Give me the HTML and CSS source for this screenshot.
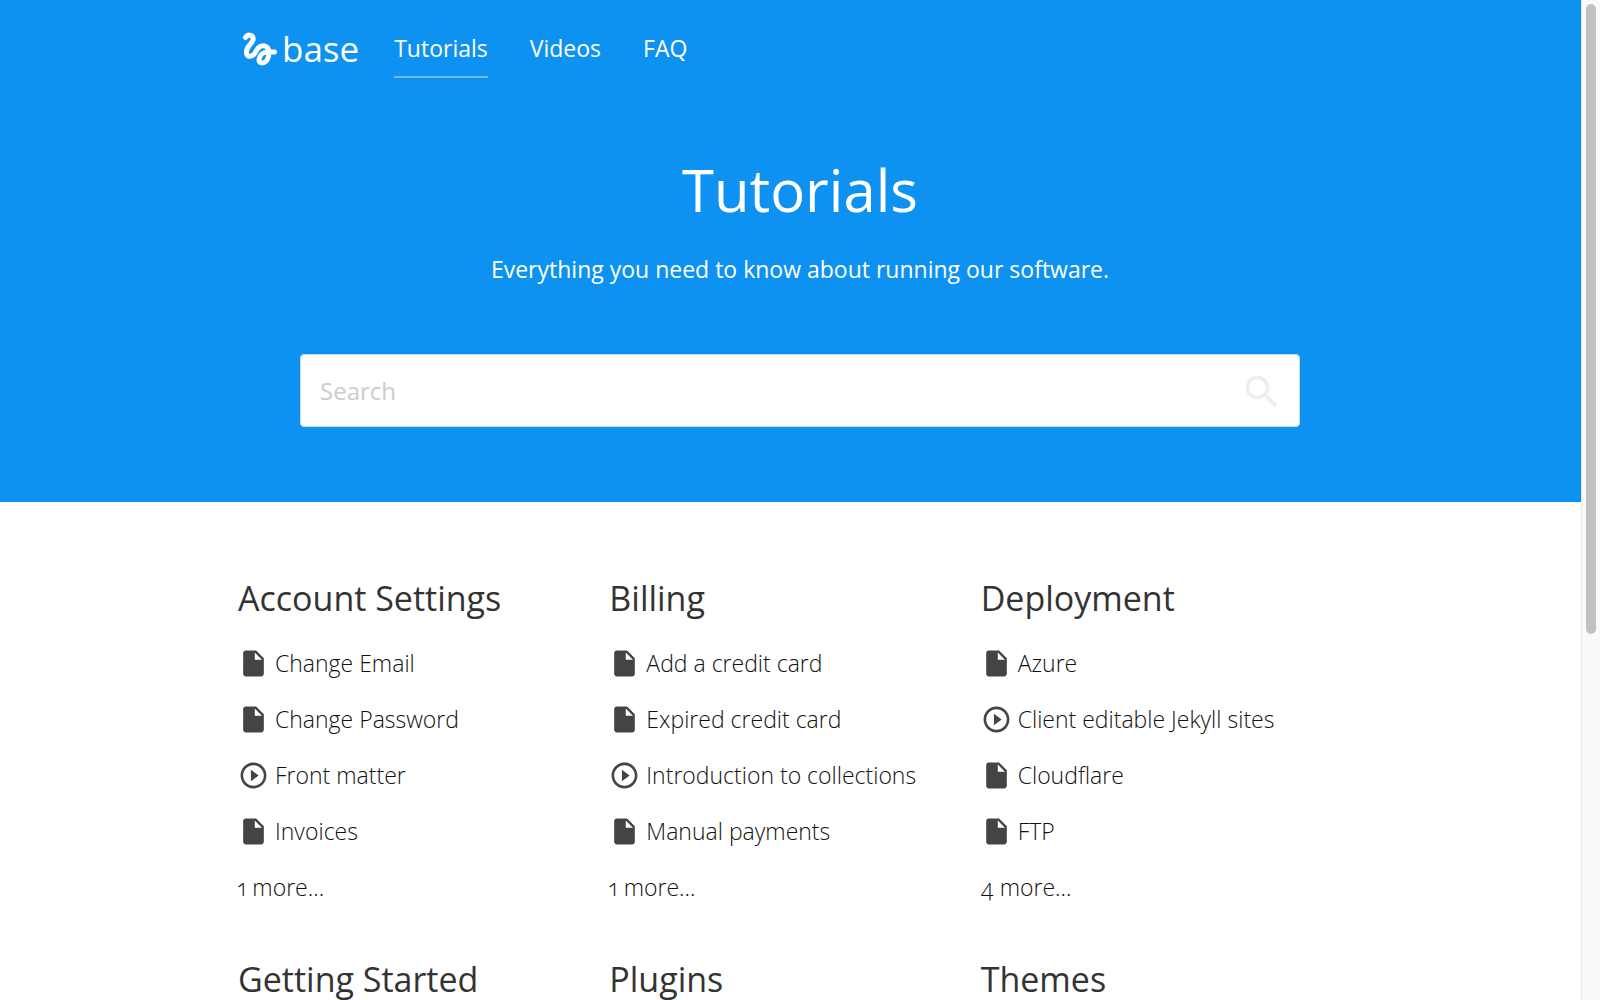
FILE: index.html
```html
<!DOCTYPE html>
<html lang="en">
<head>
<meta charset="utf-8">
<meta name="viewport" content="width=device-width, initial-scale=1">
<title>Tutorials - base</title>
<link rel="stylesheet" href="styles.css">
</head>
<body>
<svg class="sprite" aria-hidden="true">
  <symbol id="doc" viewBox="0 0 24 24"><path d="M6 2c-1.100 0-1.990.9-1.990 2L4 20c0 1.100.89 2 1.990 2H18c1.100 0 2-.9 2-2V8l-6-6H6zm7 7V3.500L18.500 9H13z"/></symbol>
  <symbol id="play" viewBox="0 0 24 24"><path d="M10 16.500l6-4.500-6-4.500v9zM12 2C6.480 2 2 6.480 2 12s4.480 10 10 10 10-4.480 10-10S17.520 2 12 2zm0 18c-4.410 0-8-3.590-8-8s3.590-8 8-8 8 3.590 8 8-3.590 8-8 8z"/></symbol>
</svg>

<div class="hero">
  <header class="container header">
    <a class="logo" href="#">
      <svg class="logo-mark" viewBox="0 0 36 36" aria-hidden="true"><path d="M4.500 6.500C7 2.500 13 4 12 9C11 13 4.500 16 5.500 22C6.500 27 11.500 26 14 22C16 17.500 19.500 14 24 15C29.500 17 28.500 25 26 29C23.500 33 17.500 33 18 28.500C18.500 24 22 21 27 21L33.500 21"/></svg>
      <span>base</span>
    </a>
    <nav class="nav">
      <a class="active" href="#">Tutorials</a>
      <a href="#">Videos</a>
      <a href="#">FAQ</a>
    </nav>
  </header>
  <div class="intro">
    <h1>Tutorials</h1>
    <p>Everything you need to know about running our software.</p>
    <form class="search" role="search">
      <input type="search" placeholder="Search" aria-label="Search">
      <button type="submit" aria-label="Submit search">
        <svg viewBox="0 0 24 24" aria-hidden="true"><path d="M15.500 14h-.79l-.28-.27C15.410 12.590 16 11.110 16 9.500 16 5.910 13.090 3 9.500 3S3 5.910 3 9.500 5.910 16 9.500 16c1.610 0 3.090-.59 4.230-1.570l.27.28v.79l5 4.990L20.490 19l-4.990-5zm-6 0C7.010 14 5 11.990 5 9.500S7.010 5 9.500 5 14 7.010 14 9.500 11.990 14 9.500 14z"/></svg>
      </button>
    </form>
  </div>
</div>

<main class="container topics">
  <section>
    <h2>Account Settings</h2>
    <ul>
      <li><a href="#"><svg><use href="#doc"/></svg>Change Email</a></li>
      <li><a href="#"><svg><use href="#doc"/></svg>Change Password</a></li>
      <li><a href="#"><svg><use href="#play"/></svg>Front matter</a></li>
      <li><a href="#"><svg><use href="#doc"/></svg>Invoices</a></li>
      <li><a href="#">1 more...</a></li>
    </ul>
  </section>
  <section>
    <h2>Billing</h2>
    <ul>
      <li><a href="#"><svg><use href="#doc"/></svg>Add a credit card</a></li>
      <li><a href="#"><svg><use href="#doc"/></svg>Expired credit card</a></li>
      <li><a href="#"><svg><use href="#play"/></svg>Introduction to collections</a></li>
      <li><a href="#"><svg><use href="#doc"/></svg>Manual payments</a></li>
      <li><a href="#">1 more...</a></li>
    </ul>
  </section>
  <section>
    <h2>Deployment</h2>
    <ul>
      <li><a href="#"><svg><use href="#doc"/></svg>Azure</a></li>
      <li><a href="#"><svg><use href="#play"/></svg>Client editable Jekyll sites</a></li>
      <li><a href="#"><svg><use href="#doc"/></svg>Cloudflare</a></li>
      <li><a href="#"><svg><use href="#doc"/></svg>FTP</a></li>
      <li><a href="#">4 more...</a></li>
    </ul>
  </section>
  <section><h2>Getting Started</h2></section>
  <section><h2>Plugins</h2></section>
  <section><h2>Themes</h2></section>
</main>

<div class="scrollbar" aria-hidden="true"><div class="thumb"></div></div>
</body>
</html>
```
FILE: styles.css
```css
* {
  box-sizing: border-box;
}

html {
  height: 100%;
  overflow: hidden;
}

body {
  margin: 0;
  height: 100%;
  overflow: hidden;
  background: #fff;
  color: #333;
  font-family: "Open Sans", "Noto Sans", sans-serif;
  font-size: 23px;
  font-weight: 400;
  line-height: 36px;
  font-variant-numeric: oldstyle-nums proportional-nums;
}

a {
  color: inherit;
  text-decoration: none;
}

h1, h2, p, ul {
  margin: 0;
  padding: 0;
}

.sprite {
  display: none;
}

.container {
  width: 100%;
  max-width: 1124px;
  margin: 0 auto;
}

/* Hero */
.hero {
  padding-bottom: 75px;
  background: #0d92f2;
  color: #fff;
}

.header {
  display: flex;
  align-items: flex-start;
  gap: 35px;
  padding-top: 25px;
}

.logo {
  display: flex;
  align-items: center;
  gap: 5px;
  padding-left: 3px;
  font-size: 35px;
  line-height: 48px;
}

.logo-mark {
  width: 36px;
  height: 36px;
  fill: none;
  stroke: #fff;
  stroke-width: 5;
  stroke-linecap: round;
  stroke-linejoin: round;
}

.nav {
  display: flex;
  gap: 42px;
  padding-top: 5px;
}

.nav a {
  padding-bottom: 10px;
  border-bottom: 2px solid transparent;
}

.nav .active {
  border-color: rgba(255, 255, 255, 0.4);
}

.intro {
  max-width: 1000px;
  margin: 72px auto 0;
  text-align: center;
}

h1 {
  margin-bottom: 21px;
  font-size: 58px;
  font-weight: 400;
  line-height: 80px;
}

.search {
  display: flex;
  align-items: center;
  height: 73px;
  margin-top: 67px;
  padding: 0 15px 0 19px;
  border: 1px solid #c8dcec;
  border-radius: 4px;
  background: #fff;
}

.search input {
  flex: 1;
  min-width: 0;
  padding: 0;
  border: 0;
  outline: 0;
  background: none;
  color: #333;
  font-family: inherit;
  font-size: 24px;
  font-weight: 400;
  line-height: 36px;
}

.search input::placeholder {
  color: #ccc;
}

.search button {
  display: flex;
  padding: 2px 0 0;
  border: 0;
  background: none;
}

.search svg {
  width: 44px;
  height: 44px;
  fill: #eee;
}

/* Topic columns */
.topics {
  display: grid;
  grid-template-columns: repeat(3, 1fr);
  row-gap: 40px;
  padding: 72px 10px 0 0;
}

h2 {
  margin-bottom: 13px;
  font-size: 34px;
  font-weight: 400;
  line-height: 48px;
}

.topics ul {
  list-style: none;
  color: #111;
  font-weight: 300;
}

.topics li a {
  display: flex;
  align-items: center;
  gap: 6px;
  height: 56px;
}

.topics svg {
  width: 31px;
  height: 31px;
  fill: #444;
}

/* Page scrollbar */
.scrollbar {
  position: fixed;
  top: 0;
  right: 0;
  bottom: 0;
  width: 19px;
  padding: 4px;
  border-left: 1px solid #e8e8e8;
  background: #fafafa;
}

.thumb {
  width: 10px;
  height: 63.5%;
  border-radius: 5px;
  background: #c1c1c1;
}
```
